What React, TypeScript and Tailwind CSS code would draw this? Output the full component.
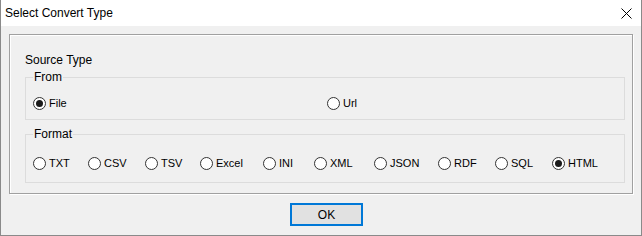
import React from 'react';

// Types
type Choice = {
  label: string;
  width: string;
  checked?: boolean;
};

// Constants
const FROM_CHOICES: Choice[] = [
  { label: 'File', width: 'w-[294px]', checked: true },
  { label: 'Url', width: 'w-auto' },
];

const FORMAT_CHOICES: Choice[] = [
  { label: 'TXT', width: 'w-[55px]' },
  { label: 'CSV', width: 'w-[57px]' },
  { label: 'TSV', width: 'w-[55px]' },
  { label: 'Excel', width: 'w-[63px]' },
  { label: 'INI', width: 'w-[51px]' },
  { label: 'XML', width: 'w-[60px]' },
  { label: 'JSON', width: 'w-[64px]' },
  { label: 'RDF', width: 'w-[57px]' },
  { label: 'SQL', width: 'w-[57px]' },
  { label: 'HTML', width: 'w-auto', checked: true },
];

const FONT = "font-['Liberation_Sans',Arial,sans-serif]";

function Radio({ label, width, checked }: Choice) {
  return (
    <div className={`flex h-[16px] shrink-0 items-center gap-[3px] ${width}`}>
      <span className="flex h-[13px] w-[13px] items-center justify-center rounded-full border border-[#333333] bg-white">
        {checked && <span className="h-[7px] w-[7px] rounded-full bg-[#1a1a1a]" />}
      </span>
      <span className="text-[11px] leading-[16px] text-black">{label}</span>
    </div>
  );
}

function GroupBox({
  title,
  choices,
  className,
}: {
  title: string;
  choices: Choice[];
  className: string;
}) {
  return (
    <fieldset className={`w-[600px] border border-[#dcdcdc] pl-[7px] ${className}`}>
      <legend className="px-[1px] text-[12px] leading-[16px] text-black">{title}</legend>
      <div className="flex items-center">
        {choices.map(choice => (
          <Radio key={choice.label} {...choice} />
        ))}
      </div>
    </fieldset>
  );
}

export default function App() {
  return (
    <div className={`h-[236px] w-[642px] bg-[#f0f0f0] ${FONT}`}>
      <div className="flex h-[236px] flex-col border-x border-b border-[#8a8a8a]">
        {/* Title bar */}
        <div className="flex h-[26px] shrink-0 items-center justify-between bg-white pr-[9px] pl-[4px]">
          <span className="text-[12px] leading-[16px] text-black">Select Convert Type</span>
          <svg width="11" height="11" viewBox="0 0 11 11" className="mt-[1px]">
            <path d="M0.5 0.5 L10.5 10.5 M10.5 0.5 L0.5 10.5" stroke="#000" strokeWidth="1" />
          </svg>
        </div>

        {/* Body */}
        <div className="flex flex-1 flex-col pt-[8px]">
          <div className="ml-[8px] h-[160px] w-[624px] border border-[#a0a0a0] pt-[17px] pr-[7px] pl-[15px] shadow-[inset_1px_1px_0_#ffffff,1px_1px_0_#ffffff]">
            <div className="text-[12px] leading-[16px] text-black">Source Type</div>
            <GroupBox title="From" choices={FROM_CHOICES} className="mt-[1px] pt-[10px] pb-[8px]" />
            <GroupBox title="Format" choices={FORMAT_CHOICES} className="mt-[6px] pt-[13px] pb-[11px]" />
          </div>

          <button className="mt-[9px] ml-[289px] h-[23px] w-[73px] border-2 border-[#0078d7] bg-[#e1e1e1] text-[12px] leading-[16px] text-black">
            OK
          </button>
        </div>
      </div>
    </div>
  );
}
